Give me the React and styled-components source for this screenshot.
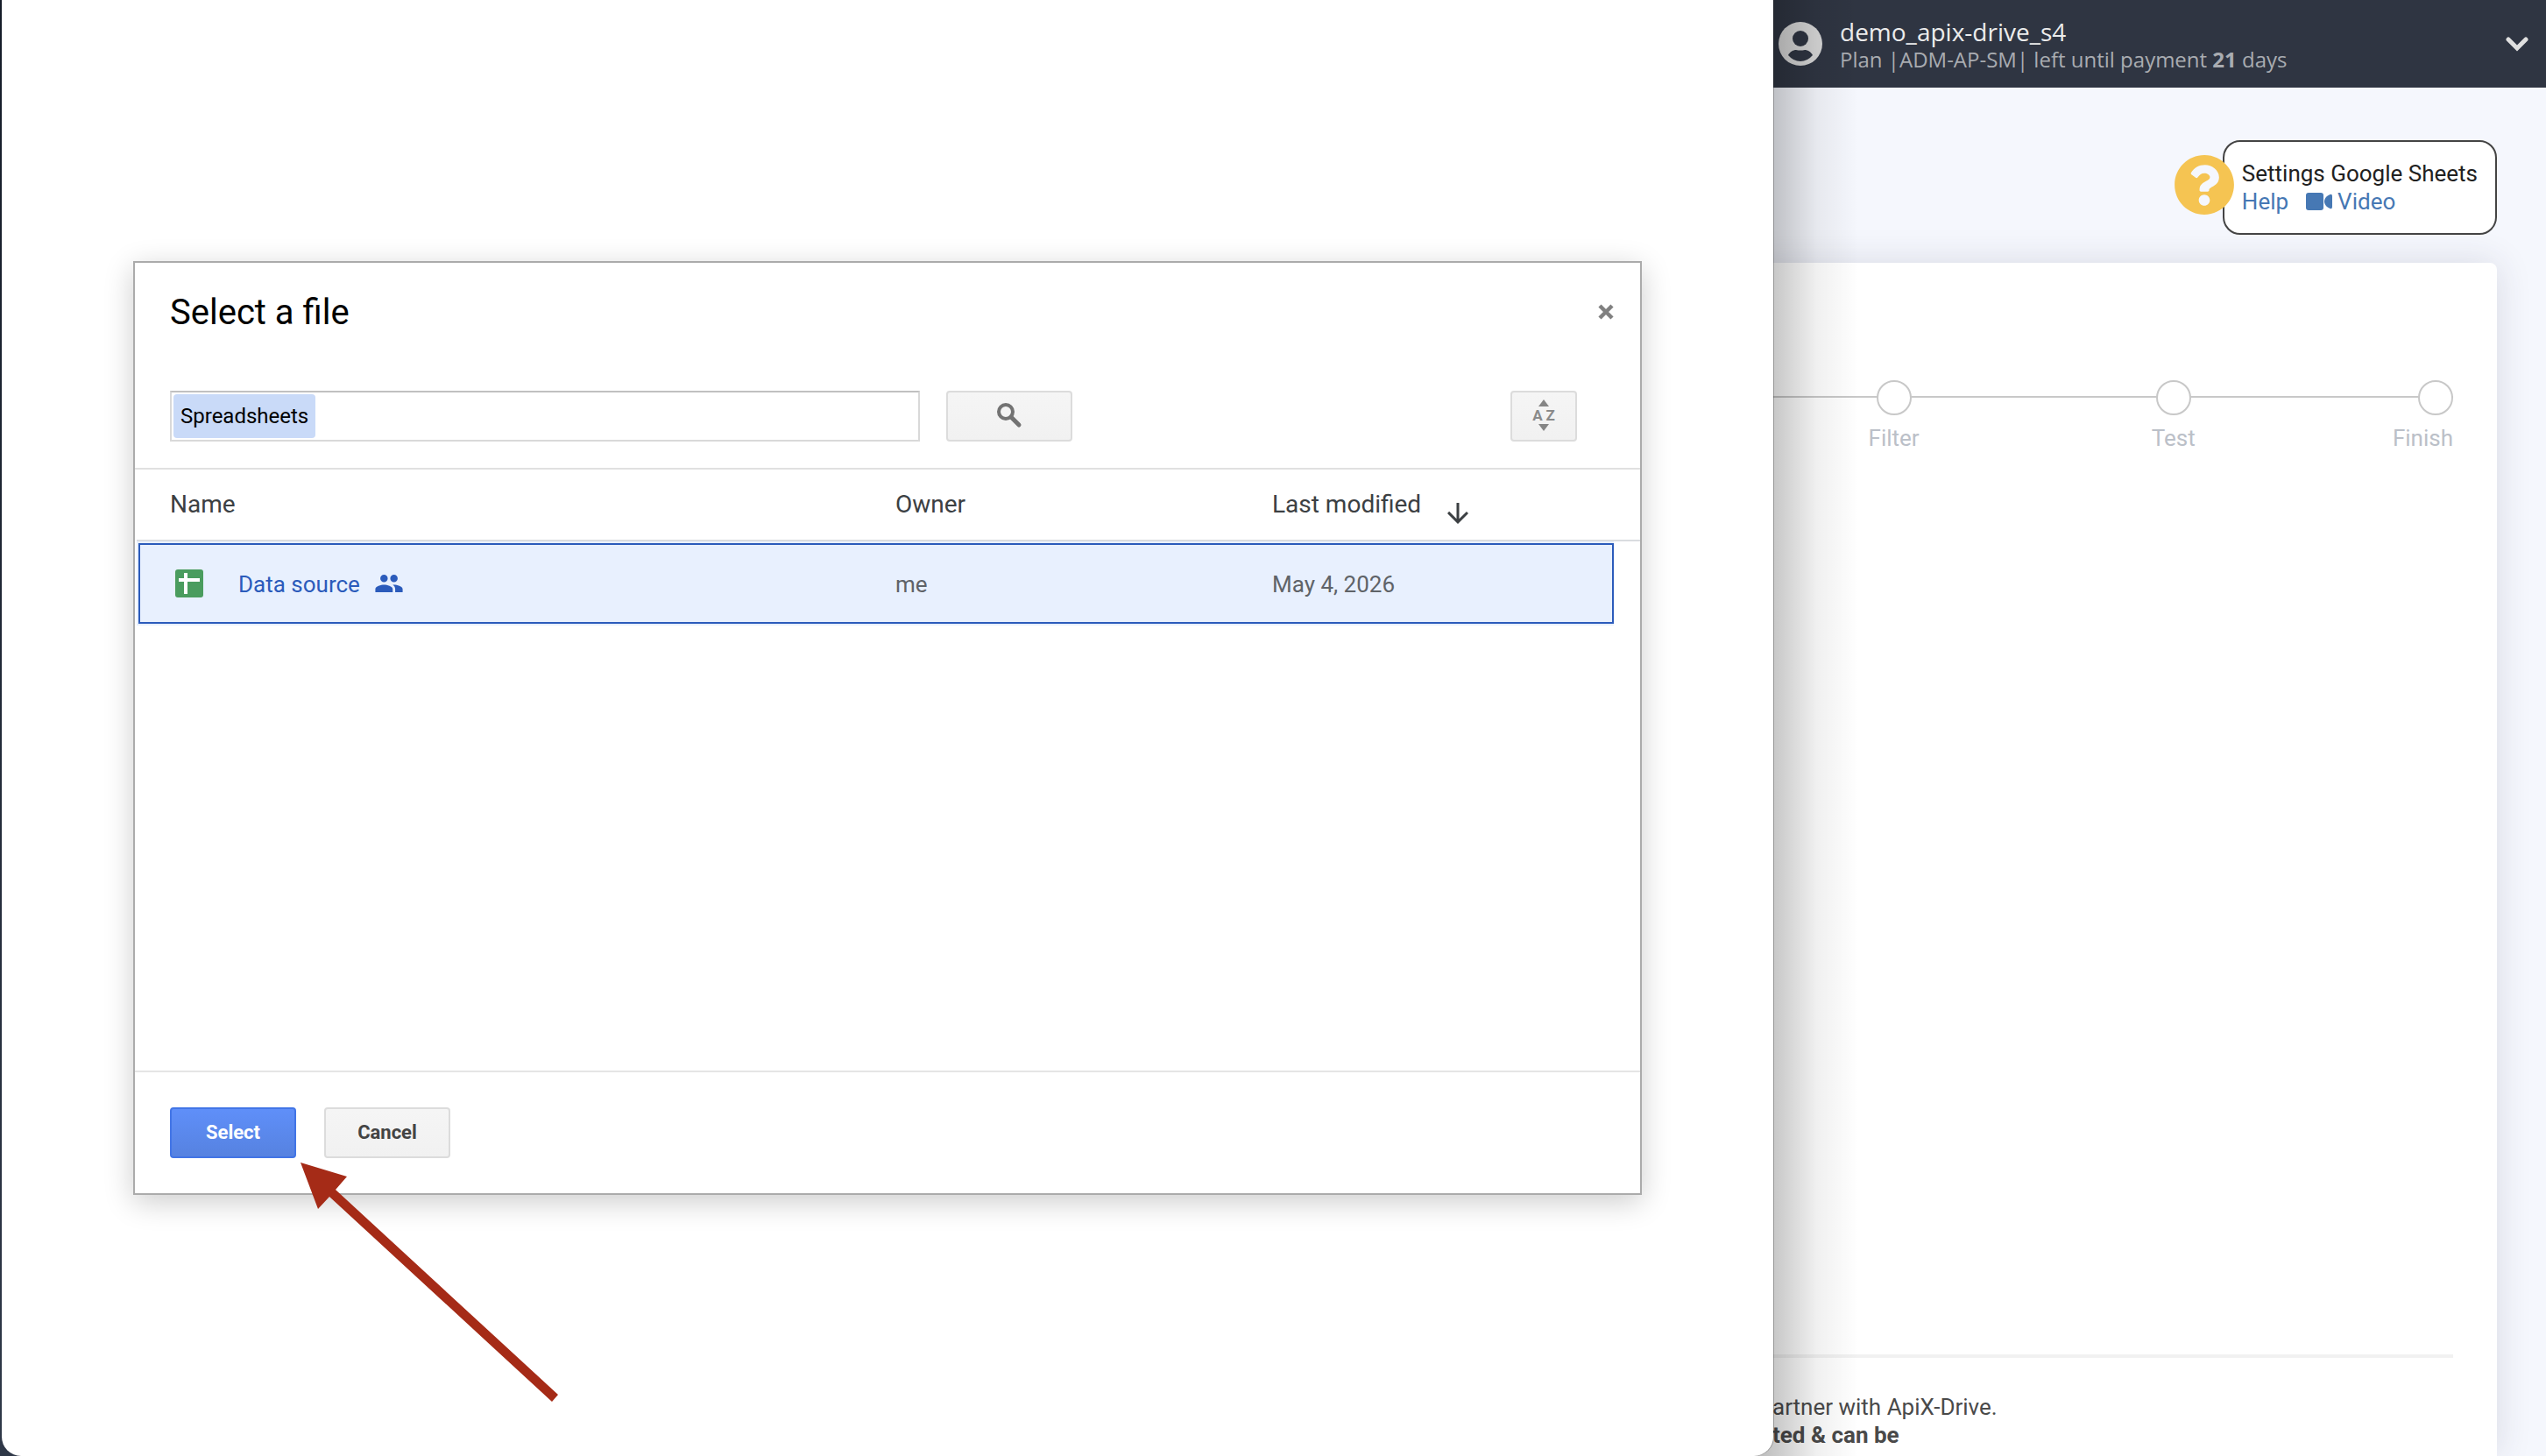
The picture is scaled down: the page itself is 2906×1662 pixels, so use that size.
import React, { useState } from "react";
import styled, { createGlobalStyle } from "styled-components";
import { FaQuestionCircle } from "react-icons/fa";
import { MdPeople, MdArrowDownward } from "react-icons/md";

const steps = ["Filter", "Test", "Finish"];

const files = [
    { id: 1, name: "Data source", owner: "me", modified: "May 4, 2026" },
];

const SheetIcon = () => (
    <svg width="32" height="32" viewBox="0 0 32 32" aria-hidden="true">
        <rect width="32" height="32" rx="3" fill="#4a9c5e" />
        <path d="M4 12H28M12 4V28" stroke="#fff" strokeWidth="4" />
    </svg>
);

const MagnifierIcon = () => (
    <svg width="30" height="30" viewBox="0 0 30 30" fill="none" stroke="#737373" aria-hidden="true">
        <circle cx="11" cy="11" r="8" strokeWidth="4" />
        <path d="M17 17L26 26" strokeWidth="5" strokeLinecap="round" />
    </svg>
);

const CloseIcon = () => (
    <svg width="18" height="18" viewBox="0 0 18 18" aria-hidden="true">
        <path d="M2 2L16 16M16 2L2 16" stroke="#808080" strokeWidth="4.5" />
    </svg>
);

const AccountIcon = () => (
    <svg width="50" height="50" viewBox="0 0 50 50" aria-hidden="true">
        <circle cx="25" cy="25" r="25" fill="#d6d6d6" />
        <circle cx="25" cy="19" r="9" fill="#2f3542" />
        <path d="M11 38C13 34 17 32 20 32Q25 33 30 32C33 32 37 34 39 38Q33 45 25 45T11 38Z" fill="#2f3542" />
    </svg>
);

const ChevronIcon = () => (
    <svg width="26" height="17" viewBox="0 0 26 17" aria-hidden="true">
        <path d="M3 3L13 13L23 3" fill="none" stroke="#e0e0e0" strokeWidth="5" strokeLinecap="round" />
    </svg>
);

const VideoIcon = () => (
    <svg width="30" height="20" viewBox="0 0 30 20" fill="#4678b4" aria-hidden="true">
        <rect width="20" height="20" rx="3" />
        <path d="M21 9Q22 4 27.500 2Q30 1 30 4V16Q30 19 27.500 18Q22 16 21 11Z" />
    </svg>
);

const TopBar = () => (
    <Header>
        <AccountIcon />
        <Account>
            <AccountName>demo_apix-drive_s4</AccountName>
            <Plan>
                Plan |ADM-AP-SM| left until payment <b>21</b> days
            </Plan>
        </Account>
        <MenuButton type="button" aria-label="Account menu">
            <ChevronIcon />
        </MenuButton>
    </Header>
);

const HelpBox = () => (
    <HelpCard>
        <HelpBadge>
            <FaQuestionCircle />
        </HelpBadge>
        <div>Settings Google Sheets</div>
        <HelpLinks>
            <a href="#help">Help</a>
            <a href="#video">
                <VideoIcon /> Video
            </a>
        </HelpLinks>
    </HelpCard>
);

const FilePicker = () => {
    const [query, setQuery] = useState("");

    return (
        <Dialog role="dialog" aria-labelledby="picker-title">
            <DialogHeader>
                <h1 id="picker-title">Select a file</h1>
                <CloseButton type="button" aria-label="Close">
                    <CloseIcon />
                </CloseButton>
            </DialogHeader>

            <SearchRow>
                <SearchField>
                    <Chip>Spreadsheets</Chip>
                    <input
                        type="text"
                        aria-label="Search"
                        value={query}
                        onChange={(e) => setQuery(e.target.value)}
                    />
                </SearchField>
                <Button type="button" aria-label="Search files">
                    <MagnifierIcon />
                </Button>
                <SortButton type="button" aria-label="Sort options">
                    <Triangle $up />
                    <SortLetters>
                        <span>A</span>
                        <span>Z</span>
                    </SortLetters>
                    <Triangle />
                </SortButton>
            </SearchRow>

            <FileArea>
                <FileTable>
                    <thead>
                        <tr>
                            <NameHead>Name</NameHead>
                            <OwnerHead>Owner</OwnerHead>
                            <th>
                                <SortLabel>
                                    Last modified <MdArrowDownward />
                                </SortLabel>
                            </th>
                            <GutterHead />
                        </tr>
                    </thead>
                    <tbody>
                        {files.map((file) => (
                            <tr key={file.id}>
                                <td>
                                    <FileName>
                                        <SheetIcon />
                                        <span>{file.name}</span>
                                        <MdPeople />
                                    </FileName>
                                </td>
                                <td>{file.owner}</td>
                                <td>{file.modified}</td>
                            </tr>
                        ))}
                    </tbody>
                </FileTable>
            </FileArea>

            <DialogFooter>
                <Button type="button" $primary>Select</Button>
                <Button type="button">Cancel</Button>
            </DialogFooter>

            <Pointer viewBox="0 0 296 274" aria-hidden="true">
                <path d="M0 0L53 16L40 31L294 265L287 273L33 39L20 53Z" fill="#a52b17" />
            </Pointer>
        </Dialog>
    );
};

const App = () => (
    <>
        <GlobalStyle />
        <Shell>
            <Sheet>
                <FilePicker />
            </Sheet>
            <Page>
                <TopBar />
                <Content>
                    <HelpBox />
                    <Panel>
                        <Stepper>
                            {steps.map((step) => (
                                <Step key={step}>
                                    <Dot />
                                    {step}
                                </Step>
                            ))}
                        </Stepper>
                        <Note>
                            artner with ApiX-Drive.
                            <br />
                            <b>ted &amp; can be</b>
                        </Note>
                    </Panel>
                </Content>
            </Page>
        </Shell>
    </>
);

const GlobalStyle = createGlobalStyle`
  * {
    box-sizing: border-box;
  }

  body {
    margin: 0;
    overflow: hidden;
    font-family: Roboto, sans-serif;
    font-size: 26px;
    line-height: 32px;
  }

  button, input {
    font-family: inherit;
  }
`;

const Shell = styled.div`
  display: grid;
  grid-template-columns: minmax(0, 1fr) 882px;
  min-height: 100vh;
  background: linear-gradient(to bottom, #151c28, #2f3848);
`;

const Sheet = styled.section`
  position: relative;
  z-index: 1;
  margin-left: 2px;
  padding-top: 298px;
  background: #fff;
  border-radius: 0 0 22px 22px;
  box-shadow: 1px 0 0 rgba(0, 0, 0, 0.25);
`;

const Page = styled.main`
  position: relative;
  display: flex;
  flex-direction: column;
  margin-left: -22px; // tucks under the rounded corner of the sheet
  background: #f5f7fd;

  &::after {
    content: '';
    position: absolute;
    top: 0;
    bottom: 0;
    left: 0;
    width: 120px;
    background: linear-gradient(to right, rgba(0, 0, 0, 0.28), rgba(0, 0, 0, 0.2) 24%, rgba(0, 0, 0, 0.06) 60%, transparent);
    pointer-events: none;
  }
`;

const Header = styled.header`
  display: flex;
  align-items: center;
  gap: 20px;
  height: 100px;
  padding: 0 20px 0 28px;
  background: #2f3542;
  color: #e0e0e0;
  font-family: "Open Sans", sans-serif;
`;

const Account = styled.div`
  flex: 1;
  padding-top: 4px;
`;

const AccountName = styled.div`
  color: #ececec;
  font-size: 28px;
`;

const Plan = styled.div`
  color: #a9acb1;
  font-size: 24px;
`;

const MenuButton = styled.button`
  display: flex;
  padding: 0;
  border: none;
  background: none;
`;

const Content = styled.div`
  flex: 1;
  display: flex;
  flex-direction: column;
  align-items: flex-end;
  gap: 32px;
  padding: 60px 56px 0 0;
`;

const HelpCard = styled.aside`
  position: relative;
  padding: 20px;
  background: #fff;
  border: 2px solid #444;
  border-radius: 20px;
  color: #212121;
`;

const HelpBadge = styled.span`
  position: absolute;
  top: 14px;
  left: -58px;
  display: flex;
  background: radial-gradient(#f5f7fd 60%, transparent 62%);
  color: #f5c452;
  font-size: 70px;
`;

const HelpLinks = styled.div`
  display: flex;
  gap: 20px;

  a {
    display: flex;
    align-items: center;
    gap: 6px;
    color: #4678b4;
    text-decoration: none;
  }
`;

const Panel = styled.section`
  flex: 1;
  align-self: stretch;
  display: flex;
  flex-direction: column;
  justify-content: space-between;
  padding: 134px 50px 8px 0;
  background: #fff;
  border-radius: 0 8px 0 0;
  box-shadow: 0 0 40px rgba(40, 40, 70, 0.14);
`;

const Stepper = styled.ol`
  display: flex;
  margin: 0;
  padding: 0;
  list-style: none;
  background: linear-gradient(#c8c8c8, #c8c8c8) 0 18px / 100% 2px no-repeat;
`;

const Step = styled.li`
  flex: 2;
  display: flex;
  flex-direction: column;
  align-items: center;
  gap: 10px;
  color: #bbc0c8;

  &:last-child {
    flex: 1;
    align-items: flex-end;
  }
`;

const Dot = styled.span`
  width: 40px;
  height: 40px;
  background: #fff;
  border: 2px solid #c8c8c8;
  border-radius: 50%;
`;

const Note = styled.p`
  margin: 0;
  padding: 40px 0 0 21px;
  border-top: 4px solid #f1f1f1;
  color: #4a4a4a;
`;

const Dialog = styled.div`
  position: relative;
  display: flex;
  flex-direction: column;
  margin: 0 150px;
  background: #fff;
  border: 2px solid #ababab;
  box-shadow: 0 8px 32px rgba(0, 0, 0, 0.2);
`;

const DialogHeader = styled.header`
  display: flex;
  align-items: center;
  justify-content: space-between;
  padding: 32px 30px 0 40px;

  h1 {
    margin: 0;
    padding-top: 2px;
    color: #000;
    font-size: 40px;
    font-weight: 400;
    line-height: 46px;
  }
`;

const CloseButton = styled.button`
  display: flex;
  padding: 0;
  border: none;
  background: none;
`;

const SearchRow = styled.div`
  display: flex;
  gap: 30px;
  padding: 66px 72px 30px 40px;
  border-bottom: 2px solid #e0e0e0;
`;

const SearchField = styled.div`
  display: flex;
  flex: 1;
  max-width: 856px;
  height: 58px;
  padding: 2px;
  border: 2px solid #d9d9d9;
  border-top-color: #c0c0c0;

  input {
    flex: 1;
    min-width: 0;
    border: none;
    outline: none;
    font-size: 24px;
  }
`;

const Chip = styled.span`
  padding: 0 8px;
  background: #c9daf8;
  border-radius: 4px;
  color: #000;
  font-size: 24px;
  line-height: 50px;
`;

const Button = styled.button`
  display: flex;
  align-items: center;
  justify-content: center;
  width: 144px;
  height: 58px;
  padding: 0 0 2px;
  background: ${({ $primary }) =>
    $primary
      ? "linear-gradient(#5f8ff9, #5682e0)"
      : "linear-gradient(#f5f5f5, #f1f1f1)"};
  border: 2px solid ${({ $primary }) => ($primary ? "#4275e6" : "#dcdcdc")};
  border-radius: 4px;
  color: ${({ $primary }) => ($primary ? "#fff" : "#444")};
  font-size: 22px;
  font-weight: 700;
`;

const SortButton = styled(Button)`
  flex-direction: column;
  gap: 4px;
  width: 76px;
  margin-left: auto;
  color: #8a8a8a;
  font-size: 17px;
  line-height: 12px;
`;

const SortLetters = styled.span`
  display: flex;
  gap: 4px;
`;

const Triangle = styled.i`
  border: 6px solid transparent;
  border-width: ${({ $up }) => ($up ? "0 6px 8px" : "8px 6px 0")};
  border-top-color: ${({ $up }) => ($up ? "transparent" : "#858585")};
  border-bottom-color: ${({ $up }) => ($up ? "#858585" : "transparent")};
`;

const FileArea = styled.div`
  min-height: 686px;
  padding-left: 2px;
`;

const FileTable = styled.table`
  width: 100%;
  border-spacing: 0;
  table-layout: fixed;
  text-align: left;

  th {
    height: 82px;
    padding: 0;
    border-bottom: 2px solid #dadce0;
    color: #3c4043;
    font-size: 28px;
    font-weight: 400;
  }

  td {
    height: 96px;
    padding: 2px 0 0;
    background: #e8f0fe;
    color: #5f6368;
    box-shadow: inset 0 2px 0 #e8f0fe, inset 0 -2px 0 #e8f0fe, inset 0 4px 0 #2b5bbb, inset 0 -4px 0 #2b5bbb;
  }

  th:first-child,
  td:first-child {
    padding-left: 38px;
  }

  td:first-child {
    padding-top: 0;
    border-left: 2px solid #e8f0fe;
    box-shadow: inset 0 2px 0 #e8f0fe, inset 0 -2px 0 #e8f0fe, inset 2px 0 0 #2b5bbb, inset 0 4px 0 #2b5bbb, inset 0 -4px 0 #2b5bbb;
  }

  td:last-child {
    box-shadow: inset 0 2px 0 #e8f0fe, inset 0 -2px 0 #e8f0fe, inset -2px 0 0 #2b5bbb, inset 0 4px 0 #2b5bbb, inset 0 -4px 0 #2b5bbb;
  }
`;

const NameHead = styled.th`
  width: 866px;
`;

const OwnerHead = styled.th`
  width: 430px;
`;

const GutterHead = styled.td`
  && {
    width: 30px;
  }

  thead && {
    height: auto;
    background: none;
    border-bottom: 2px solid #dadce0;
    box-shadow: none;
  }
`;

const SortLabel = styled.span`
  display: flex;
  align-items: center;
  gap: 24px;
  height: 32px;

  svg {
    margin-top: 20px;
    font-size: 36px;
  }
`;

const FileName = styled.div`
  display: flex;
  align-items: center;
  gap: 16px;
  padding-left: 4px;
  color: #2b5bbb;

  span {
    padding: 2px 0 0 24px;
  }

  svg:last-child {
    font-size: 34px;
  }
`;

const DialogFooter = styled.footer`
  display: flex;
  gap: 32px;
  padding: 40px;
  border-top: 2px solid #e5e5e5;
`;

const Pointer = styled.svg`
  position: absolute;
  top: 1027px;
  left: 189px;
  width: 296px;
  pointer-events: none;
`;

export default App;
